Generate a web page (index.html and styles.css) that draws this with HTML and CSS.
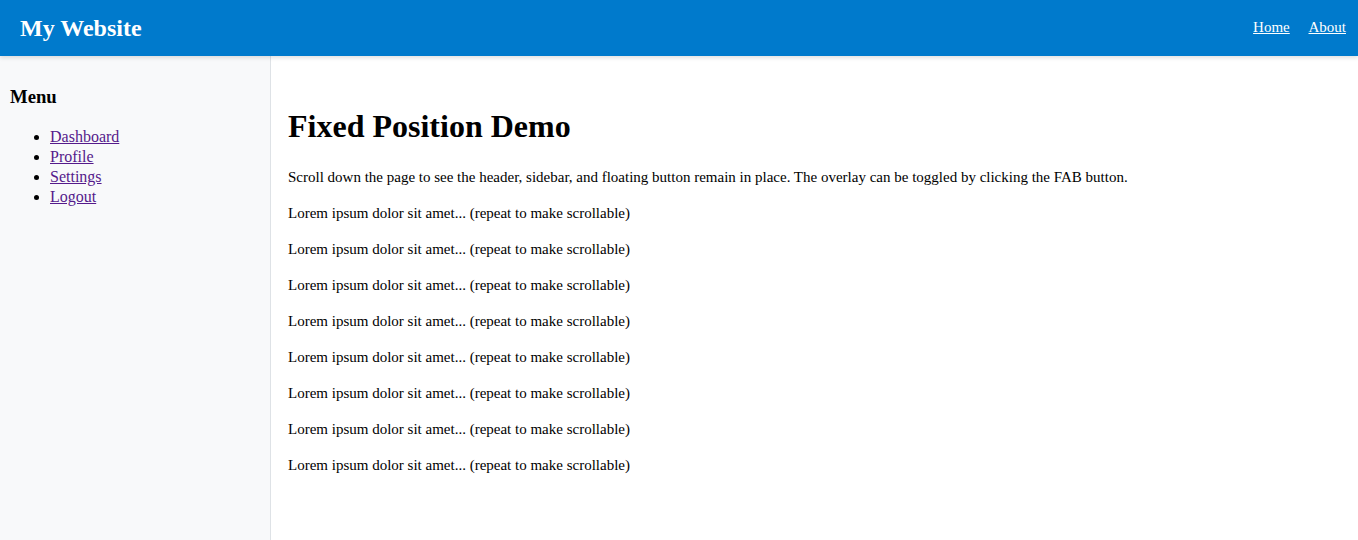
FILE: index.html
```html
<!DOCTYPE html>
<html lang="en">
<head>
<meta charset="utf-8">
<title>Fixed Position Demo</title>
<link rel="stylesheet" href="styles.css">
</head>
<body>
<header class="site-header">
  <div class="brand">My Website</div>
  <nav class="top-nav">
    <a href="#">Home</a>
    <a href="#">About</a>
  </nav>
</header>
<div class="layout">
  <aside class="sidebar">
    <h3 class="sidebar-title">Menu</h3>
    <ul class="sidebar-list">
      <li><a href="#">Dashboard</a></li>
      <li><a href="#">Profile</a></li>
      <li><a href="#">Settings</a></li>
      <li><a href="#">Logout</a></li>
    </ul>
  </aside>
  <main class="content">
    <h1 class="page-title">Fixed Position Demo</h1>
    <p>Scroll down the page to see the header, sidebar, and floating button remain in place. The overlay can be toggled by clicking the FAB button.</p>
    <p>Lorem ipsum dolor sit amet... (repeat to make scrollable)</p>
    <p>Lorem ipsum dolor sit amet... (repeat to make scrollable)</p>
    <p>Lorem ipsum dolor sit amet... (repeat to make scrollable)</p>
    <p>Lorem ipsum dolor sit amet... (repeat to make scrollable)</p>
    <p>Lorem ipsum dolor sit amet... (repeat to make scrollable)</p>
    <p>Lorem ipsum dolor sit amet... (repeat to make scrollable)</p>
    <p>Lorem ipsum dolor sit amet... (repeat to make scrollable)</p>
    <p>Lorem ipsum dolor sit amet... (repeat to make scrollable)</p>
  </main>
</div>
</body>
</html>
```

FILE: styles.css
```css
html, body {
  margin: 0;
  padding: 0;
  height: 100%;
}
body {
  font-family: "Liberation Serif", "Times New Roman", serif;
  font-size: 16px;
  line-height: 1.25;
  color: #000;
  background: #fff;
  display: flex;
  flex-direction: column;
  overflow: hidden;
}
.site-header {
  position: relative;
  z-index: 2;
  flex: 0 0 56px;
  height: 56px;
  box-sizing: border-box;
  background: #007acc;
  color: #fff;
  display: flex;
  align-items: center;
  justify-content: space-between;
  padding: 0 12px 0 20px;
  box-shadow: 0 2px 4px rgba(0, 0, 0, 0.12);
}
.brand {
  font-size: 24px;
  font-weight: bold;
  margin-top: -1px;
}
.top-nav {
  font-size: 15px;
  margin-top: -1px;
}
.top-nav a {
  color: #fff;
  margin-left: 15px;
}
.layout {
  flex: 1;
  display: flex;
  min-height: 0;
}
.sidebar {
  flex: 0 0 250px;
  width: 250px;
  padding: 10px;
  background: #f8f9fa;
  border-right: 1px solid #dee2e6;
}
.sidebar-title {
  font-size: 18.72px;
  margin: 18.72px 0;
}
.sidebar-list {
  margin: 16px 0;
  padding-left: 40px;
}
.sidebar-list a {
  color: #551a8b;
}
.content {
  flex: 1;
  padding: 29px 17px 0 17px;
}
.page-title {
  font-size: 32px;
  margin: 21.44px 0 20.44px;
}
.content p {
  font-size: 15px;
  line-height: 20px;
  margin: 16px 0;
}
```
